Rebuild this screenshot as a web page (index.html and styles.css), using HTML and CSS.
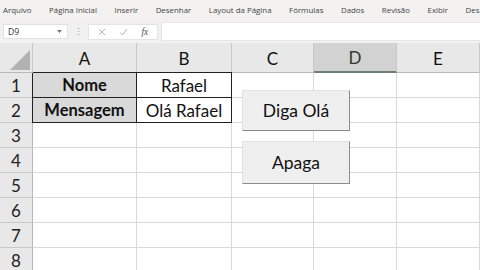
FILE: index.html
```html
<!DOCTYPE html>
<html lang="pt-BR">
<head>
    <meta charset="UTF-8">
    <title>Excel - Diga Olá</title>
    <link rel="stylesheet" href="styles.css">
</head>
<body>
    <div class="app">
        <!-- Ribbon tabs -->
        <div class="menu-bar">
            <span class="menu-item">Arquivo</span>
            <span class="menu-item">Página Inicial</span>
            <span class="menu-item">Inserir</span>
            <span class="menu-item">Desenhar</span>
            <span class="menu-item">Layout da Página</span>
            <span class="menu-item">Fórmulas</span>
            <span class="menu-item">Dados</span>
            <span class="menu-item">Revisão</span>
            <span class="menu-item">Exibir</span>
            <span class="menu-item">Des</span>
        </div>

        <!-- Formula bar -->
        <div class="formula-bar">
            <div class="name-box">
                <span>D9</span>
                <svg class="name-arrow" width="5" height="3" viewBox="0 0 5 3"><path d="M0 0 L5 0 L2.5 3 Z" fill="#777"/></svg>
            </div>
            <div class="bar-dots">⋮</div>
            <div class="bar-buttons">
                <svg width="8" height="8" viewBox="0 0 8 8"><path d="M1 1 L7 7 M7 1 L1 7" stroke="#b4b4b4" stroke-width="1"/></svg>
                <svg width="9" height="8" viewBox="0 0 9 8"><path d="M1 4.5 L3.5 7 L8 1" stroke="#b4b4b4" stroke-width="1" fill="none"/></svg>
                <span class="fx">fx</span>
            </div>
            <div class="bar-input"></div>
        </div>

        <!-- Sheet -->
        <div class="sheet">
            <div class="sheet-grid">
                <div class="hdr corner"><div class="corner-mark"></div></div>
                <div class="hdr">A</div>
                <div class="hdr">B</div>
                <div class="hdr">C</div>
                <div class="hdr selected">D</div>
                <div class="hdr">E</div>

                <div class="row-num">1</div>
                <div class="cell label bt bl">Nome</div>
                <div class="cell value bt">Rafael</div>
                <div class="cell"></div>
                <div class="cell"></div>
                <div class="cell"></div>

                <div class="row-num">2</div>
                <div class="cell label bl">Mensagem</div>
                <div class="cell value">Olá Rafael</div>
                <div class="cell"></div>
                <div class="cell"></div>
                <div class="cell"></div>

                <div class="row-num">3</div>
                <div class="cell"></div><div class="cell"></div><div class="cell"></div><div class="cell"></div><div class="cell"></div>
                <div class="row-num">4</div>
                <div class="cell"></div><div class="cell"></div><div class="cell"></div><div class="cell"></div><div class="cell"></div>
                <div class="row-num">5</div>
                <div class="cell"></div><div class="cell"></div><div class="cell"></div><div class="cell"></div><div class="cell"></div>
                <div class="row-num">6</div>
                <div class="cell"></div><div class="cell"></div><div class="cell"></div><div class="cell"></div><div class="cell"></div>
                <div class="row-num">7</div>
                <div class="cell"></div><div class="cell"></div><div class="cell"></div><div class="cell"></div><div class="cell"></div>
                <div class="row-num">8</div>
                <div class="cell"></div><div class="cell"></div><div class="cell"></div><div class="cell"></div><div class="cell"></div>
            </div>

            <!-- Form buttons floating over the sheet -->
            <button class="form-button btn-diga">Diga Olá</button>
            <button class="form-button btn-apaga">Apaga</button>
        </div>
    </div>
</body>
</html>
```

FILE: styles.css
```css
body {
    margin: 0;
    width: 480px;
    height: 270px;
    overflow: hidden;
    background-color: #ffffff;
    font-family: 'Lato', 'Noto Sans', sans-serif;
    color: #111111;
}

.app {
    display: flex;
    flex-direction: column;
    height: 270px;
}

/* ribbon tabs */
.menu-bar {
    height: 19px;
    background-color: #f3f2f1;
    display: flex;
    align-items: center;
    padding-left: 3px;
    gap: 17.5px;
    white-space: nowrap;
    overflow: hidden;
    font-family: 'Open Sans', 'Noto Sans', sans-serif;
    font-size: 7.9px;
    color: #444444;
}

/* formula bar */
.formula-bar {
    height: 23px;
    background-color: #f1f1f1;
    display: flex;
    align-items: center;
    padding-top: 1px;
}

.name-box {
    width: 65px;
    height: 15px;
    margin-left: 3px;
    background-color: #ffffff;
    border: 1px solid #e1e1e1;
    display: flex;
    align-items: center;
    justify-content: space-between;
    padding: 0 5px 0 4px;
    box-sizing: border-box;
    font-family: 'Open Sans', 'Noto Sans', sans-serif;
    font-size: 8.6px;
    color: #333333;
}

.bar-dots {
    width: 20px;
    text-align: center;
    font-size: 9px;
    color: #999999;
}

.bar-buttons {
    width: 70px;
    height: 16px;
    background-color: #ffffff;
    border: 1px solid #e4e4e4;
    box-sizing: border-box;
    display: flex;
    align-items: center;
    justify-content: space-around;
    padding: 0 2px 0 2px;
}

.fx {
    font-family: 'Liberation Serif', serif;
    font-style: italic;
    font-size: 9.5px;
    color: #555555;
}

.bar-input {
    flex: 1;
    height: 17px;
    margin-left: 3px;
    background-color: #ffffff;
    border: 1px solid #e6e6e6;
    border-right: none;
}

/* sheet */
.sheet {
    position: relative;
    flex: 1;
    overflow: hidden;
}

.sheet-grid {
    display: grid;
    grid-template-columns: 33px 104px 95px 82px 83px 1fr;
    grid-template-rows: 30px repeat(8, 25px);
}

.hdr {
    background-color: #e8e8e8;
    border-right: 1px solid #c8c8c8;
    border-bottom: 1px solid #b8b8b8;
    display: flex;
    align-items: center;
    justify-content: center;
    font-size: 17px;
    color: #111111;
    padding-top: 1px;
}

.hdr.corner {
    position: relative;
}

.corner-mark {
    position: absolute;
    right: 2px;
    bottom: 2px;
    width: 20px;
    height: 20px;
    background-color: #b2b2b2;
    clip-path: polygon(100% 0, 100% 100%, 0 100%);
}

.hdr.selected {
    background-color: #d2d2d2;
    border-bottom: 2px solid #6c7f72;
    color: #2b3b30;
}

.row-num {
    background-color: #e8e8e8;
    border-right: 1px solid #b8b8b8;
    border-bottom: 1px solid #c8c8c8;
    display: flex;
    align-items: center;
    justify-content: center;
    font-size: 17px;
    color: #222222;
}

.cell {
    border-right: 1px solid #d9d9d9;
    border-bottom: 1px solid #d9d9d9;
    display: flex;
    align-items: center;
    justify-content: center;
    font-size: 17px;
}

.cell.label {
    background-color: #d9d9d9;
    font-weight: bold;
    font-size: 16.5px;
    border-right: 1px solid #222222;
    border-bottom: 1px solid #222222;
}

.cell.value {
    border-right: 1px solid #222222;
    border-bottom: 1px solid #222222;
}

.cell.bt {
    border-top: 1px solid #222222;
    margin-top: -1px;
}

.cell.bl {
    border-left: 1px solid #222222;
    margin-left: -1px;
}

/* floating form buttons */
.form-button {
    position: absolute;
    left: 242px;
    width: 108px;
    background-color: #efefef;
    border: 1px solid #e2e2e2;
    border-right-color: #8c8c8c;
    border-bottom-color: #8c8c8c;
    font-family: 'Lato', 'Noto Sans', sans-serif;
    font-size: 17.5px;
    color: #111111;
    padding: 0;
}

.btn-diga {
    top: 47px;
    height: 41px;
}

.btn-apaga {
    top: 98px;
    height: 43px;
}
```
